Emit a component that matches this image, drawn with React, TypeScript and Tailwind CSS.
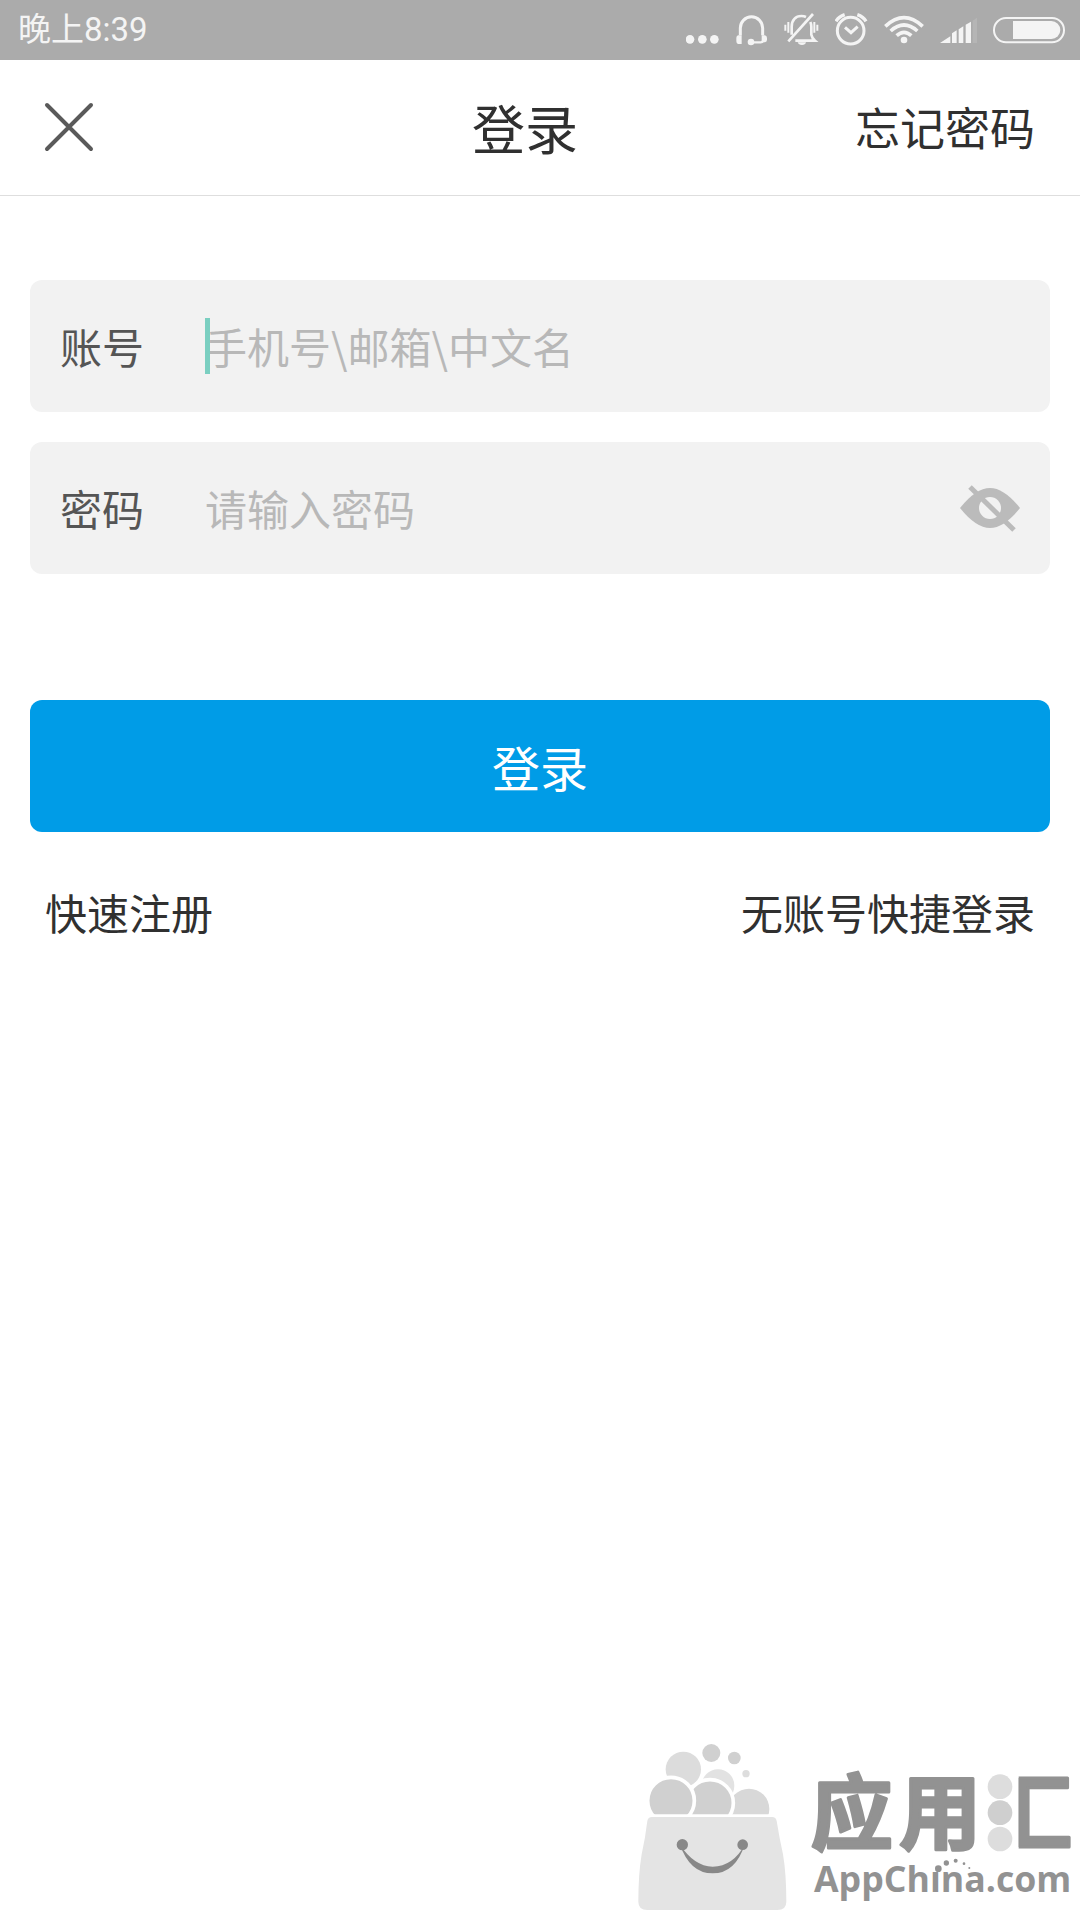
import * as React from "react";
import { useState } from "react";

function StatusBar() {
  return (
    <div className="flex h-[60px] items-center justify-between bg-[#ababab] pl-[18px] pr-[15px] text-[#f4f4f4]">
      <span className="font-['Roboto','Noto_Sans_CJK_SC',sans-serif] text-[33px] leading-[48px]">晚上8:39</span>
      <div className="flex items-center gap-4" aria-hidden="true">
        <svg className="h-9 w-[33px]" viewBox="48 36 99 108" fill="currentColor">
          <circle cx="60" cy="118" r="13" />
          <circle cx="97" cy="118" r="13" />
          <circle cx="133" cy="118" r="13" />
        </svg>
        <svg className="h-9 w-[33px]" viewBox="195 36 99 108" fill="none" stroke="currentColor">
          <path d="M211 106V84a33 33 0 0 1 67 0v22" strokeWidth="9" />
          <path d="M280 120q0 7-8 7h-30" strokeWidth="7" />
          <path d="M204 106q-5 2-5 8v10q0 6 5 8h11v-26zM285 106q6 2 6 8v5q0 6-6 8h-10v-21z" fill="currentColor" stroke="none" />
          <circle cx="243" cy="126" r="10" fill="currentColor" stroke="none" />
        </svg>
        <svg className="h-9 w-[35px]" viewBox="342 36 105 108" fill="none" stroke="currentColor">
          <path d="M365 104V80c0-20 12-32 29-32q8 0 14 3M421 66q3 6 3 14v24q2 10 11 18h-59" strokeWidth="8" />
          <path d="M429 42 355 124" strokeWidth="8" />
          <path d="M355 66v32M346 74v18M433 66v32M442 74v18" strokeWidth="6" />
          <path d="M383 127h25q-2 8-12 8t-13-8z" fill="currentColor" stroke="none" />
        </svg>
        <svg className="h-9 w-[33px]" viewBox="495 36 99 108" fill="none" stroke="currentColor">
          <circle cx="542" cy="92" r="40" strokeWidth="9" />
          <path d="M525 82l18 16 20-18" strokeWidth="9" />
          <path d="M498 64q8-14 26-20M588 64q-8-14-26-20" strokeWidth="10" />
        </svg>
        <svg className="h-9 w-10" viewBox="642 36 120 108" fill="none" stroke="currentColor" strokeWidth="11">
          <path d="M646 79q56-52 112 0M662 93q40-36 80 0M680 107q22-20 44 0" />
          <circle cx="702" cy="120" r="10" fill="currentColor" stroke="none" />
        </svg>
        <svg className="h-9 w-[37px]" viewBox="810 36 111 108" fill="currentColor">
          <path d="M810 129l31-20v20zM846 129v-29l14-9v38zM866 129V88l14-9v50zM887 129V74l16-9v64z" />
          <path d="M908 129V62l13-9v76z" opacity="0.15" />
        </svg>
        <svg className="h-9 w-[72px]" viewBox="969 36 216 108" fill="none">
          <rect x="972" y="54" width="210" height="73" rx="36" stroke="currentColor" strokeWidth="6" />
          <path d="M1029 63h115a27 27 0 0 1 0 54h-115z" fill="currentColor" />
        </svg>
      </div>
    </div>
  );
}

function Header() {
  return (
    <header className="flex h-[136px] items-center justify-between border-b border-[#dedede] pr-[45px] pb-0.5 text-[#303030]">
      <button type="button" aria-label="关闭" className="w-[195px] py-4 pl-[44px] text-[#5a5a5a]">
        <svg className="size-[50px]" viewBox="0 0 50 50" stroke="currentColor" strokeWidth="4" strokeLinecap="round">
          <path d="M3 3l44 44M47 3L3 47" />
        </svg>
      </button>
      <h1 className="text-[53px] leading-[72px]">登录</h1>
      <a href="#forgot" className="text-[45px] leading-[60px]">
        忘记密码
      </a>
    </header>
  );
}

const fieldClass = "flex h-[132px] items-center rounded-xl bg-[#f2f2f2] px-[30px] text-[42px] leading-[60px]";
const labelClass = "w-[145px] shrink-0 text-[#555555]";
const inputClass = "w-full bg-transparent text-[#303030] outline-none placeholder:text-[#b8b8b8]";

function LoginForm() {
  const [visible, setVisible] = useState(false);

  return (
    <form className="px-[30px] pt-[84px]" onSubmit={(e) => e.preventDefault()}>
      <div className={fieldClass}>
        <label htmlFor="account" className={labelClass}>
          账号
        </label>
        <div className="relative flex-1">
          <input id="account" type="text" placeholder="手机号\邮箱\中文名" className={inputClass} />
          <span className="absolute inset-y-[2px] left-0 w-[5px] bg-[#7bcfc1]" />
        </div>
      </div>
      <div className={`${fieldClass} mt-[30px]`}>
        <label htmlFor="password" className={labelClass}>
          密码
        </label>
        <input
          id="password"
          type={visible ? "text" : "password"}
          placeholder="请输入密码"
          className={inputClass}
        />
        <button type="button" aria-label="显示密码" className="shrink-0" onClick={() => setVisible(!visible)}>
          <svg className="h-[50px] w-[60px]" viewBox="0 0 60 50" fill="none">
            <path d="M0 25Q16 5 30 5T60 25Q44 45 30 45T0 25z" fill="#bbbbbb" />
            <circle cx="30" cy="25" r="11" fill="#f2f2f2" />
            <path d="M10 4l44 43" stroke="#bbbbbb" strokeWidth="5" />
          </svg>
        </button>
      </div>
      <button
        type="submit"
        className="mt-[126px] h-[132px] w-full rounded-xl bg-[#009ce7] text-[48px] leading-[60px] text-white"
      >
        登录
      </button>
    </form>
  );
}

// App store mark in the bottom corner: shopping bag plus word mark
function StoreMark() {
  return (
    <footer className="mt-auto flex items-end justify-end">
      <svg className="h-[200px] w-[180px]" viewBox="0 0 540 600" fill="none" aria-hidden="true">
        <circle cx="274" cy="99" r="27" fill="#d0d0d0" />
        <circle cx="343" cy="114" r="19" fill="#d0d0d0" />
        <circle cx="378" cy="161" r="11" fill="#dddddd" />
        <circle cx="190" cy="148" r="53" fill="#dcdcdc" />
        <circle cx="294" cy="197" r="49" fill="#e2e2e2" />
        <circle cx="387" cy="267" r="61" fill="#d8d8d8" />
        <circle cx="270" cy="249" r="70" fill="#d0d0d0" stroke="#ffffff" strokeWidth="11" />
        <circle cx="153" cy="242" r="70" fill="#d0d0d0" stroke="#ffffff" strokeWidth="11" />
        <path d="M60 283h420v60H60z" fill="#ffffff" />
        <path d="M96 291h360q12 0 14 12 8 50 19 100 10 60 10 142 0 25-27 25H82q-27 0-27-25 0-82 10-142 11-50 17-100 2-12 14-12z" fill="#e4e4e4" />
        <path d="M180 374q30 86 98 86t96-86q-34 64-96 66-56-2-98-66z" fill="#888888" />
        <circle cx="187" cy="374" r="17" fill="#888888" />
        <circle cx="368" cy="374" r="16" fill="#888888" />
      </svg>
      <svg className="h-[170px] w-[280px]" viewBox="0 0 840 510" fill="#929292" role="img" aria-label="应用汇 AppChina.com">
        {/* the three discs stand in for the water radical of 汇 */}
        <clipPath id="radical">
          <path d="M0 0h545v510H0zM656 0h184v510H656z" />
        </clipPath>
        <g
          className="font-bold"
          fontFamily="'Liberation Sans', 'Noto Sans CJK SC', sans-serif"
          fontSize="246"
          stroke="#929292"
          strokeWidth="9"
          strokeLinejoin="round"
          clipPath="url(#radical)"
        >
          <text y="278">
            <tspan x="32">应</tspan>
            <tspan x="297">用</tspan>
            <tspan x="570">汇</tspan>
          </text>
        </g>
        <circle cx="600" cy="110" r="37" fill="#dddddd" />
        <circle cx="600" cy="188" r="37" fill="#cfcfcf" />
        <circle cx="600" cy="267" r="37" fill="#dddddd" />
        <text x="42" y="427" className="font-bold" fontFamily="'Open Sans', sans-serif" fontSize="107">
          AppChına.com
        </text>
        <circle cx="415" cy="356" r="10" />
        <circle cx="439" cy="339" r="8" />
        <circle cx="467" cy="332" r="6" />
        <circle cx="492" cy="341" r="4" />
        <circle cx="508" cy="354" r="3" />
      </svg>
    </footer>
  );
}

export default function App() {
  return (
    <div className="flex min-h-screen flex-col bg-white font-['Noto_Sans_CJK_SC',sans-serif]">
      <StatusBar />
      <Header />
      <main>
        <LoginForm />
        <nav className="mt-[50px] flex justify-between px-[45px] text-[42px] leading-[60px] text-[#303030]">
          <a href="#register">快速注册</a>
          <a href="#quick-login">无账号快捷登录</a>
        </nav>
      </main>
      <StoreMark />
    </div>
  );
}
